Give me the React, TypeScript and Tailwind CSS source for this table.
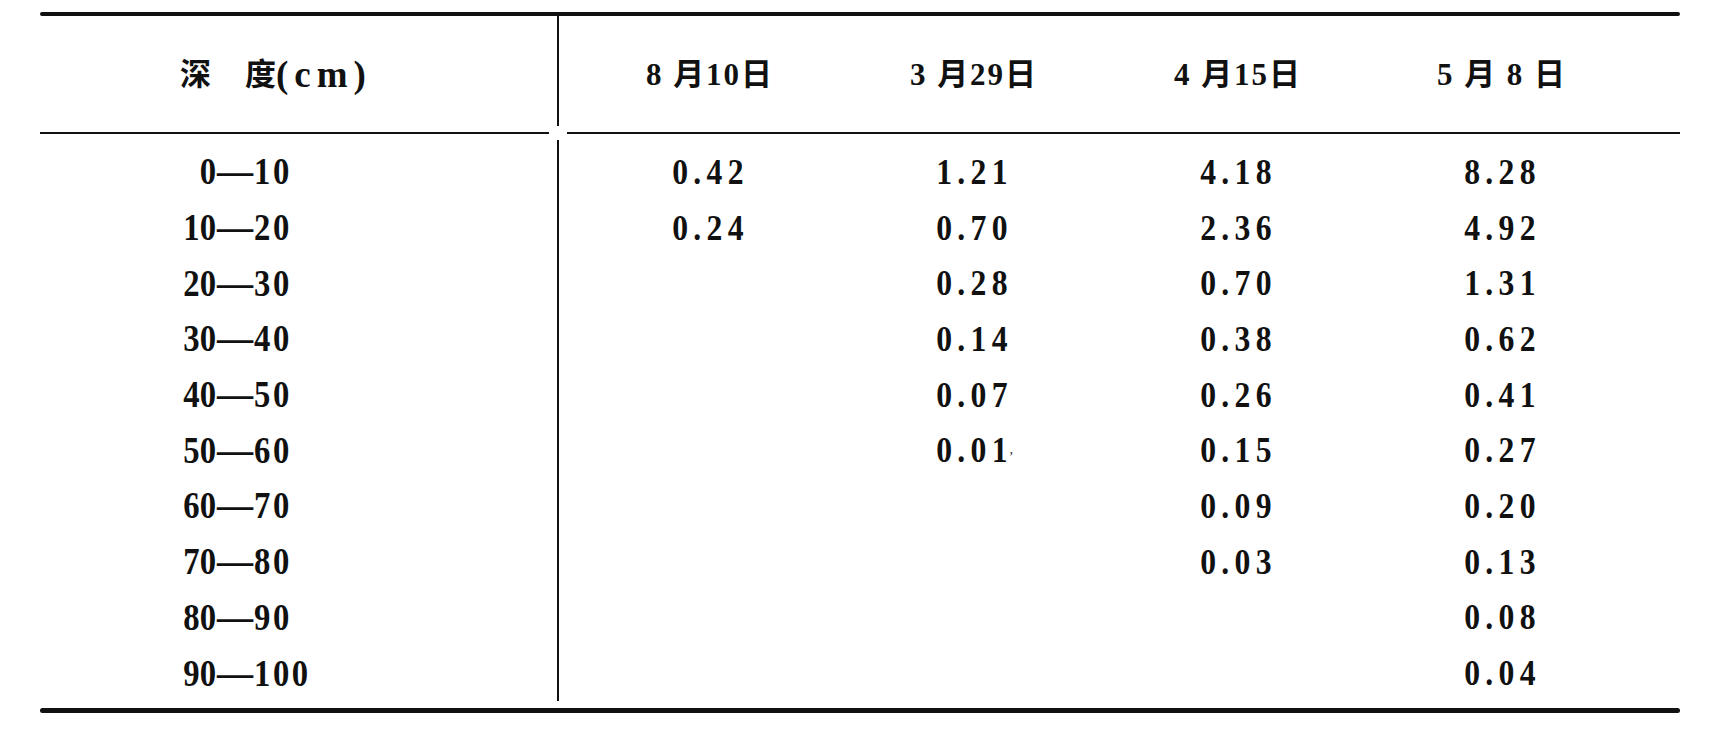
import React from "react";

const columns = ["8 月10日", "3 月29日", "4 月15日", "5 月 8 日"];

const rows: { from: string; to: string; values: string[] }[] = [
    { from: "0", to: "10", values: ["0.42", "1.21", "4.18", "8.28"] },
    { from: "10", to: "20", values: ["0.24", "0.70", "2.36", "4.92"] },
    { from: "20", to: "30", values: ["", "0.28", "0.70", "1.31"] },
    { from: "30", to: "40", values: ["", "0.14", "0.38", "0.62"] },
    { from: "40", to: "50", values: ["", "0.07", "0.26", "0.41"] },
    { from: "50", to: "60", values: ["", "0.01", "0.15", "0.27"] },
    { from: "60", to: "70", values: ["", "", "0.09", "0.20"] },
    { from: "70", to: "80", values: ["", "", "0.03", "0.13"] },
    { from: "80", to: "90", values: ["", "", "", "0.08"] },
    { from: "90", to: "100", values: ["", "", "", "0.04"] },
];

export default function App() {
    return (
        <div
            className="w-[1710px] h-[739px] bg-white text-[#111] font-bold overflow-hidden"
            style={{ fontFamily: '"Liberation Serif", "Noto Sans CJK SC", serif' }}
        >
            <div className="ml-[40px] w-[1640px] pt-[12px]">
                {/* top rule */}
                <div className="h-[4px] bg-[#111] rounded-full" />

                {/* header */}
                <div className="flex h-[116px]">
                    <div className="w-[517px] flex items-center pl-[140px] pt-[2px] text-[31px]">
                        <span>深</span>
                        <span className="ml-[34px]">度</span>
                        <span className="text-[37px] tracking-[6px]">(cm)</span>
                    </div>
                    <div className="w-[2px] bg-[#111] mb-[6px]" />
                    <div className="grid grid-cols-[repeat(4,264px)] pl-[19px] items-center pt-[2px] text-[31px] tracking-[2px]">
                        {columns.map((c) => (
                            <div key={c} className="text-center whitespace-pre">
                                {c}
                            </div>
                        ))}
                    </div>
                </div>

                {/* header rule, broken where the column rule crosses */}
                <div className="flex h-[2px]">
                    <div className="w-[509px] bg-[#111]" />
                    <div className="w-[18px]" />
                    <div className="flex-1 bg-[#111]" />
                </div>

                {/* body */}
                <div className="flex pt-[10px] pb-[7px]">
                    <div className="w-[517px] pl-[118px] text-[38px]">
                        {rows.map((r) => (
                            <div key={r.from} className="h-[55.7px] flex items-center">
                                <span className="w-[58px] text-right">
                                    <span className="inline-block origin-right scale-x-[0.86]">{r.from}</span>
                                </span>
                                <span className="w-[38px] text-center">
                                    <span className="inline-block scale-x-[0.95]">—</span>
                                </span>
                                <span className="inline-block origin-left scale-x-[0.86] tracking-[3px]">{r.to}</span>
                            </div>
                        ))}
                    </div>
                    <div className="w-[2px] bg-[#111] -mt-[4px]" />
                    <div className="pl-[19px] text-[36px] tracking-[6px]">
                        {rows.map((r) => (
                            <div key={r.from} className="h-[55.7px] grid grid-cols-[repeat(4,264px)] items-center">
                                {r.values.map((v, i) => (
                                    <div key={i} className="text-center">
                                        {v && (
                                            <span className="relative inline-block scale-x-[0.88]">
                                                {v}
                                                {r.from === "50" && i === 1 && (
                                                    <span className="absolute -right-[6px] top-[16px] text-[14px] font-normal">
                                                        ,
                                                    </span>
                                                )}
                                            </span>
                                        )}
                                    </div>
                                ))}
                            </div>
                        ))}
                    </div>
                </div>

                {/* bottom rule */}
                <div className="h-[5px] bg-[#111] rounded-full" />
            </div>
        </div>
    );
}
